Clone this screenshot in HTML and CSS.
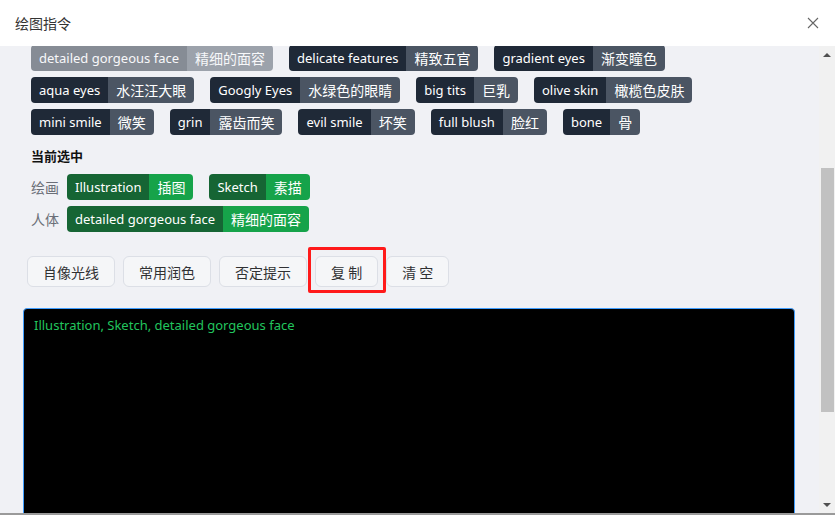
FILE: index.html
```html
<!DOCTYPE html>
<html lang="zh-CN">
<head>
<meta charset="utf-8">
<title>绘图指令</title>
<link rel="stylesheet" href="styles.css">
</head>
<body>
<div class="dialog">
  <header class="head">
    <span class="title">绘图指令</span>
    <svg class="close" width="12" height="12" viewBox="0 0 12 12"><path d="M1 1L11 11M11 1L1 11" stroke="#666" stroke-width="1.1" fill="none"/></svg>
  </header>
  <div class="main">
    <div class="content">
      <div class="tags">
        <div class="tag-row">
          <span class="tag dim"><span class="en">detailed gorgeous face</span><span class="zh">精细的面容</span></span>
          <span class="tag"><span class="en">delicate features</span><span class="zh">精致五官</span></span>
          <span class="tag"><span class="en">gradient eyes</span><span class="zh">渐变瞳色</span></span>
        </div>
        <div class="tag-row">
          <span class="tag"><span class="en">aqua eyes</span><span class="zh">水汪汪大眼</span></span>
          <span class="tag"><span class="en">Googly Eyes</span><span class="zh">水绿色的眼睛</span></span>
          <span class="tag"><span class="en">big tits</span><span class="zh">巨乳</span></span>
          <span class="tag"><span class="en">olive skin</span><span class="zh">橄榄色皮肤</span></span>
        </div>
        <div class="tag-row">
          <span class="tag"><span class="en">mini smile</span><span class="zh">微笑</span></span>
          <span class="tag"><span class="en">grin</span><span class="zh">露齿而笑</span></span>
          <span class="tag"><span class="en">evil smile</span><span class="zh">坏笑</span></span>
          <span class="tag"><span class="en">full blush</span><span class="zh">脸红</span></span>
          <span class="tag"><span class="en">bone</span><span class="zh">骨</span></span>
        </div>
      </div>
      <div class="sel-title">当前选中</div>
      <div class="sel-row">
        <span class="lbl">绘画</span>
        <span class="tag green"><span class="en">Illustration</span><span class="zh">插图</span></span>
        <span class="tag green"><span class="en">Sketch</span><span class="zh">素描</span></span>
      </div>
      <div class="sel-row">
        <span class="lbl">人体</span>
        <span class="tag green"><span class="en">detailed gorgeous face</span><span class="zh">精细的面容</span></span>
      </div>
      <div class="btns">
        <button class="btn">肖像光线</button>
        <button class="btn">常用润色</button>
        <button class="btn">否定提示</button>
        <button class="btn marked">复 制</button>
        <button class="btn">清 空</button>
      </div>
      <div class="prompt">Illustration, Sketch, detailed gorgeous face</div>
    </div>
    <div class="scrollbar">
      <div class="arrow up"></div>
      <div class="track"><div class="thumb"></div></div>
      <div class="arrow down"></div>
    </div>
  </div>
</div>
</body>
</html>
```
FILE: styles.css
```css
* { box-sizing: border-box; }
html, body { margin: 0; padding: 0; }
body {
  font-family: "Noto Sans", "Noto Sans CJK SC", sans-serif;
  font-size: 14px;
  color: #303133;
  background: #fff;
}
.dialog {
  width: 835px;
  height: 515px;
  display: flex;
  flex-direction: column;
  border-bottom: 2px solid #9a9a9a;
  overflow: hidden;
}
.head {
  height: 46px;
  flex: none;
  display: flex;
  align-items: center;
  justify-content: space-between;
  padding: 0 16px 0 15px;
  background: #fff;
}
.title {
  font-family: "Noto Sans CJK SC", sans-serif;
  font-size: 14px;
  color: #333;
}
.close { display: block; }
.main {
  flex: 1;
  display: flex;
  min-height: 0;
  background: #f0f1f5;
}
.content {
  flex: 1;
  min-width: 0;
  overflow: hidden;
  padding: 0 24px 0 23px;
}
.tags {
  margin-top: -1px;
  padding-left: 8px;
  display: flex;
  flex-direction: column;
  gap: 6px;
}
.tag-row {
  display: flex;
  gap: 16px;
}
.tag {
  display: inline-flex;
  height: 26px;
  line-height: 26px;
  border-radius: 4px;
  overflow: hidden;
  color: #fff;
  font-size: 14px;
  white-space: nowrap;
}
.tag .en {
  background: #1f2937;
  padding: 0 8px;
  font-family: "Noto Sans", sans-serif;
  font-size: 13px;
}
.tag .zh {
  background: #4b5563;
  padding: 0 8px;
  font-family: "Noto Sans CJK SC", sans-serif;
  font-size: 14px;
}
.tag.dim { opacity: 0.5; }
.tag.green .en { background: #166534; }
.tag.green .zh { background: #16a34a; }
.sel-title {
  margin-top: 11px;
  padding-left: 8px;
  height: 20px;
  line-height: 20px;
  font-family: "Noto Sans CJK SC", sans-serif;
  font-weight: 700;
  font-size: 13px;
  color: #111;
}
.sel-row {
  display: flex;
  align-items: center;
  gap: 16px;
  padding-left: 8px;
  margin-top: 6px;
}
.sel-title + .sel-row { margin-top: 8px; }
.lbl {
  font-family: "Noto Sans CJK SC", sans-serif;
  font-size: 14px;
  color: #6b6f78;
  width: 28px;
  margin-right: -8px;
}
.btns {
  display: flex;
  gap: 8px;
  margin-top: 24px;
  padding-left: 4px;
}
.btn {
  position: relative;
  height: 31px;
  padding: 0 15px;
  border: 1px solid #dcdfe6;
  border-radius: 6px;
  background: #f5f6f8;
  font-family: "Noto Sans CJK SC", sans-serif;
  font-size: 14px;
  color: #303133;
  white-space: pre;
}
.btn.marked::after {
  content: "";
  position: absolute;
  top: -10px;
  left: -8px;
  right: -9px;
  bottom: -7px;
  border: 3px solid #ff1a1a;
  border-radius: 2px;
}
.prompt {
  margin-top: 21px;
  height: 240px;
  background: #000;
  border: 1px solid #409eff;
  border-radius: 4px;
  padding: 6px 10px;
  color: #22c55e;
  font-family: "Noto Sans", sans-serif;
  font-size: 13px;
  line-height: 20px;
}
.scrollbar {
  width: 16px;
  flex: none;
  background: #f1f1f1;
  display: flex;
  flex-direction: column;
}
.arrow {
  height: 17px;
  flex: none;
  display: flex;
  align-items: center;
  justify-content: center;
}
.arrow::before {
  content: "";
  width: 0;
  height: 0;
  border-left: 4px solid transparent;
  border-right: 4px solid transparent;
}
.arrow.up::before { border-bottom: 4px solid #505050; }
.arrow.down::before { border-top: 4px solid #505050; }
.track {
  flex: 1;
  padding: 105px 1px 0 2px;
}
.thumb {
  height: 244px;
  background: #c1c1c1;
}
```
